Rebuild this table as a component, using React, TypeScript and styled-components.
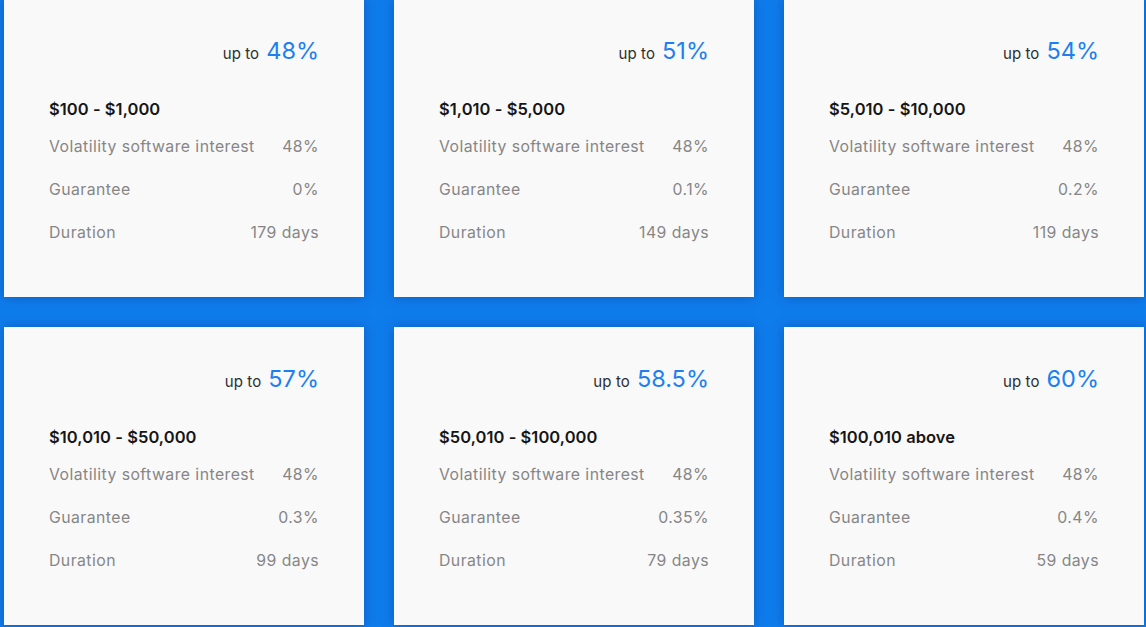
import React from "react";
import styled, { createGlobalStyle } from "styled-components";

const GlobalStyle = createGlobalStyle`
  html, body {
    margin: 0;
    padding: 0;
    background: #0f7bec;
    overflow: hidden;
  }
  body {
    font-family: "Inter", "Open Sans", "Liberation Sans", sans-serif;
  }
`;

const Page = styled.div`
  width: 1146px;
  height: 627px;
  background: #0f7cec;
  box-sizing: border-box;
  padding-left: 4px;
  overflow: hidden;
`;

const Grid = styled.div`
  display: grid;
  grid-template-columns: repeat(3, 360px);
  grid-auto-rows: 298px;
  column-gap: 30px;
  row-gap: 30px;
  margin-top: -1px;
`;

const Card = styled.div`
  background: #f9f9f9;
  box-shadow: 0 0 12px rgba(0, 40, 110, 0.35);
  box-sizing: border-box;
  padding: 37px 45px 0 45px;
  display: flex;
  flex-direction: column;
`;

const Header = styled.div`
  display: flex;
  justify-content: flex-end;
  align-items: baseline;
  gap: 7px;
  height: 30px;
  line-height: 30px;
`;

const UpTo = styled.span`
  font-size: 15px;
  color: #2e2e2e;
  letter-spacing: 0.1px;
`;

const Percent = styled.span`
  font-size: 23.5px;
  color: #1d7ff0;
  font-weight: 400;
`;

const Title = styled.div`
  margin-top: 31px;
  font-size: 16.5px;
  line-height: 24px;
  font-weight: 600;
  color: #161616;
  letter-spacing: 0.05px;
`;

const Rows = styled.div`
  margin-top: 14px;
  display: flex;
  flex-direction: column;
  gap: 19px;
`;

const Row = styled.div`
  display: flex;
  justify-content: space-between;
  font-size: 15.8px;
  line-height: 24px;
  color: #868686;
  letter-spacing: 0.45px;
`;

type Plan = {
  pct: string;
  range: string;
  guarantee: string;
  duration: string;
};

const plans: Plan[] = [
  { pct: "48%", range: "$100 - $1,000", guarantee: "0%", duration: "179 days" },
  { pct: "51%", range: "$1,010 - $5,000", guarantee: "0.1%", duration: "149 days" },
  { pct: "54%", range: "$5,010 - $10,000", guarantee: "0.2%", duration: "119 days" },
  { pct: "57%", range: "$10,010 - $50,000", guarantee: "0.3%", duration: "99 days" },
  { pct: "58.5%", range: "$50,010 - $100,000", guarantee: "0.35%", duration: "79 days" },
  { pct: "60%", range: "$100,010 above", guarantee: "0.4%", duration: "59 days" },
];

export default function App() {
  return (
    <>
      <GlobalStyle />
      <Page>
        <Grid>
          {plans.map((p) => (
            <Card key={p.range}>
              <Header>
                <UpTo>up to</UpTo>
                <Percent>{p.pct}</Percent>
              </Header>
              <Title>{p.range}</Title>
              <Rows>
                <Row>
                  <span>Volatility software interest</span>
                  <span>48%</span>
                </Row>
                <Row>
                  <span>Guarantee</span>
                  <span>{p.guarantee}</span>
                </Row>
                <Row>
                  <span>Duration</span>
                  <span>{p.duration}</span>
                </Row>
              </Rows>
            </Card>
          ))}
        </Grid>
      </Page>
    </>
  );
}
